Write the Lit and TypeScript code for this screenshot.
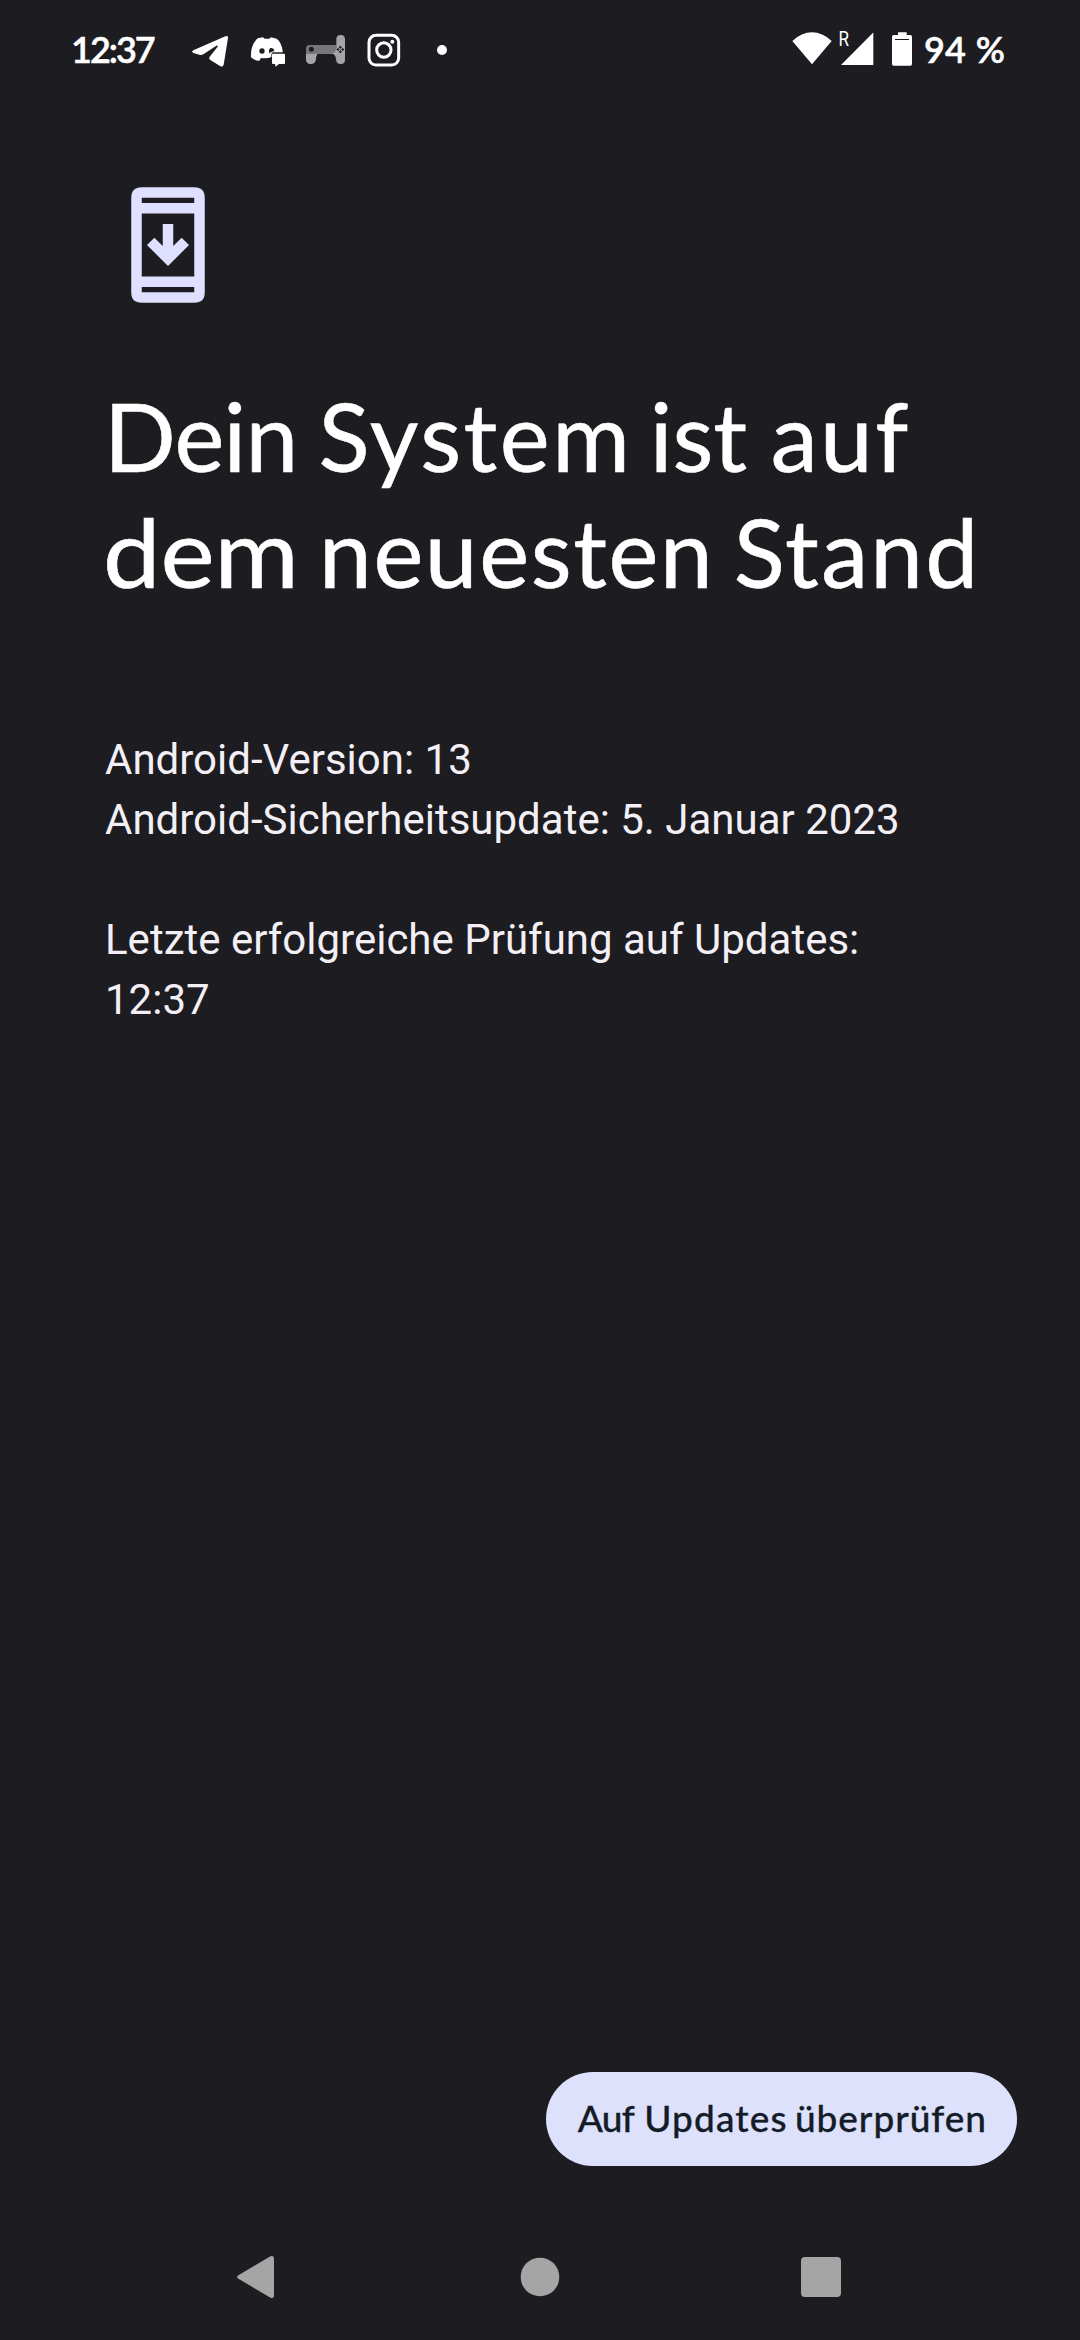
import { LitElement, html, css } from "lit";
import { customElement } from "lit/decorators.js";

@customElement("status-bar")
class StatusBar extends LitElement {
  static styles = css`
    :host {
      display: flex;
      height: 100px;
      padding: 0 75px 0 71px;
      box-sizing: border-box;
      justify-content: space-between;
      color: #fff;
      font: 600 36px/100px Lato, sans-serif;
    }
    .side { display: flex; align-items: center; }
    svg { display: block; flex: none; fill: currentColor; overflow: visible; }
    .time, .level { line-height: 96px; padding-bottom: 3px; white-space: nowrap; -webkit-text-stroke: 0.500px #fff; }
    .time { width: 85px; margin-right: 34px; letter-spacing: -2px; }
    .icons { display: flex; align-items: center; gap: 21px; }
    .dot { width: 10px; height: 10px; border-radius: 50%; background: #fff; margin-left: 15px; }
    .level { margin-left: 11px; word-spacing: 1px; }
    .signal { margin-left: 6px; }
    .battery { margin-left: 17px; }
    .roam { font: 400 20px Roboto, sans-serif; }
  `;

  render() {
    return html`
      <div class="side">
        <span class="time">12:37</span>
        <div class="icons">
          <svg width="40" height="40" viewBox="390 30 120 120">
            <path d="M400 91L496 49Q505 45 504 54L491 134Q488 143 480 138L450 119Q445 115 449 110L473 80Q474 75 469 77L430 103Q424 106 418 104L400 99Q393 95 400 91Z"/>
          </svg>
          <svg width="34" height="40" viewBox="35 30 102 120">
            <path d="M55 55L71 52L76 56H90L95 52L112 56Q126 65 130 93V97H103Q96 97 96 105V111Q84 116 65 114L60 122Q45 122 35 112Q33 75 55 55Z"/>
            <circle cx="68" cy="93" r="8" fill="#1d1c21"/>
            <path d="M93 84Q104 83 105 93L98 95Q92 97 91 101Q86 91 93 84Z" fill="#1d1c21"/>
            <path d="M101 101H134Q137 101 137 105V129Q137 132 134 132H119L109 140L107 132H101Q98 132 98 129V105Q98 101 101 101Z"/>
          </svg>
          <svg width="40" height="40" viewBox="198 30 120 120">
            <path d="M198 86Q198 75 209 75H289V102H232Q228 106 228 115Q227 132 213 132Q198 132 198 116Z" fill="#77767a"/>
            <path d="M198 102H232Q228 107 228 115Q227 132 213 132Q198 132 198 116Z" fill="#a5a5a8"/>
            <path d="M289 58Q289 45 302 45Q315 45 315 58V119Q315 132 302 132Q288 132 288 117Q288 107 280 102H267Q286 102 289 84Z" fill="#a5a5a8"/>
            <circle cx="214" cy="88" r="7.5" fill="#1d1c21"/>
            <path d="M301 77l5 4.500-5 4.500-5-4.500zM301 91l5 4.500-5 4.500-5-4.500zM294 84l5 4.500-5 4.500-5-4.500zM308 84l5 4.500-5 4.500-5-4.500z" fill="#1d1c21"/>
          </svg>
          <svg width="34" height="40" viewBox="382 30 102 120">
            <rect x="388" y="46" width="89" height="89" rx="21" fill="none" stroke="#fff" stroke-width="9"/>
            <circle cx="432.500" cy="90" r="21.500" fill="none" stroke="#fff" stroke-width="9"/>
            <circle cx="458" cy="65" r="6"/>
          </svg>
          <div class="dot"></div>
        </div>
      </div>
      <div class="side">
        <svg width="40" height="40" viewBox="37 30 120 120">
          <path d="M38 63Q66 37 97 37Q128 37 156 63L97 133Z"/>
        </svg>
        <svg class="signal" width="36" height="40" viewBox="0 0 36 40">
          <path d="M3 35L35.300 2.500V35Z"/>
          <text class="roam" x="0.500" y="16" textLength="10.500" lengthAdjust="spacingAndGlyphs">R</text>
        </svg>
        <svg class="battery" width="22" height="40" viewBox="333 30 66 120">
          <path d="M354 37H380V45H391Q396 45 396 50V132Q396 137 391 137H341Q336 137 336 132V50Q336 45 341 45H354Z"/>
          <path d="M345 57H387V60H345Z" fill="#1d1c21"/>
        </svg>
        <span class="level">94 %</span>
      </div>
    `;
  }
}

@customElement("nav-bar")
class NavBar extends LitElement {
  static styles = css`
    :host {
      display: flex;
      height: 126px;
      align-items: center;
      justify-content: space-between;
      padding: 0 239px;
    }
    svg { display: block; fill: #a5a5a5; overflow: visible; }
    .back { margin-left: -3px; }
  `;

  render() {
    return html`
      <svg class="back" width="43" height="44" viewBox="0 0 43 44">
        <path d="M2 20.500L34.500 1.300Q38 0 38 3.500V40.500Q38 44 34.500 42.700L2 23.500Q0.300 22 2 20.500Z"/>
      </svg>
      <svg width="40" height="44" viewBox="0 0 40 44"><circle cx="20" cy="22" r="19.300"/></svg>
      <svg width="40" height="44" viewBox="0 0 40 44"><rect y="2" width="40" height="40" rx="4"/></svg>
    `;
  }
}

@customElement("app-root")
class AppRoot extends LitElement {
  static styles = css`
    :host {
      display: flex;
      flex-direction: column;
      height: 100vh;
      background: #1d1c21;
      font-family: Roboto, sans-serif;
    }
    .content { flex: 1; padding: 82px 60px 0 105px; }
    .icon { display: block; width: 126px; height: 126px; fill: #dfe0ff; }
    h1 {
      margin: 70px 0 0;
      color: #fff;
      font: 400 94.500px/116px Lato, sans-serif;
      white-space: nowrap;
      -webkit-text-stroke: 0.600px #fff;
    }
    .line { display: block; }
    .dein { margin-left: -1px; letter-spacing: -0.8px; }
    .system { margin-left: -3px; letter-spacing: 2.500px; }
    .ist { margin-left: -6.900px; }
    .auf { margin-left: -0.700px; letter-spacing: 2.400px; }
    .dem { display: inline-block; margin-left: -1.600px; transform: scaleX(1.085); transform-origin: left; }
    .neuesten { margin-left: 10.900px; letter-spacing: 1.600px; }
    .stand { margin-left: -4.700px; letter-spacing: 2.200px; }
    .info { margin: 120px 0 0; color: #f2eff5; font-size: 42px; line-height: 60px; white-space: pre-line; }
    .actions { display: flex; justify-content: flex-end; padding: 0 63px 48px 0; }
    button {
      width: 471px;
      height: 94px;
      padding: 0 0 2px 31.700px;
      border: 0;
      border-radius: 47px;
      background: #dde1fb;
      color: #141c28;
      font: 500 37px/92px Lato, sans-serif;
      text-align: left;
      white-space: nowrap;
      -webkit-text-stroke: 0.300px #141c28;
    }
    .b1 { letter-spacing: -0.700px; }
    .b2 { margin-left: 0.700px; letter-spacing: 1.150px; }
    .b3 { margin-left: -2.100px; letter-spacing: 0.950px; }
  `;

  render() {
    return html`
      <status-bar></status-bar>
      <main class="content">
        <svg class="icon" viewBox="0 0 24 24">
          <path fill-rule="evenodd" d="M7 1H17Q19 1 19 3V21Q19 23 17 23H7Q5 23 5 21V3Q5 1 7 1ZM7 3V4H17V3ZM7 6V18H17V6ZM7 20V21H17V20Z"/>
          <path d="M16 12L12 16L8 12L9.400 10.600L11 12.200V8H13V12.200L14.600 10.600Z"/>
        </svg>
        <h1>
          <span class="line"><span class="dein">Dein</span> <span class="system">System</span> <span class="ist">ist</span> <span class="auf">auf</span></span>
          <span class="line"><span class="dem">dem</span> <span class="neuesten">neuesten</span> <span class="stand">Stand</span></span>
        </h1>
        <p class="info">Android-Version: 13
Android-Sicherheitsupdate: 5. Januar 2023

Letzte erfolgreiche Prüfung auf Updates:
12:37</p>
      </main>
      <div class="actions">
        <button><span class="b1">Auf</span> <span class="b2">Updates</span> <span class="b3">überprüfen</span></button>
      </div>
      <nav-bar></nav-bar>
    `;
  }
}
